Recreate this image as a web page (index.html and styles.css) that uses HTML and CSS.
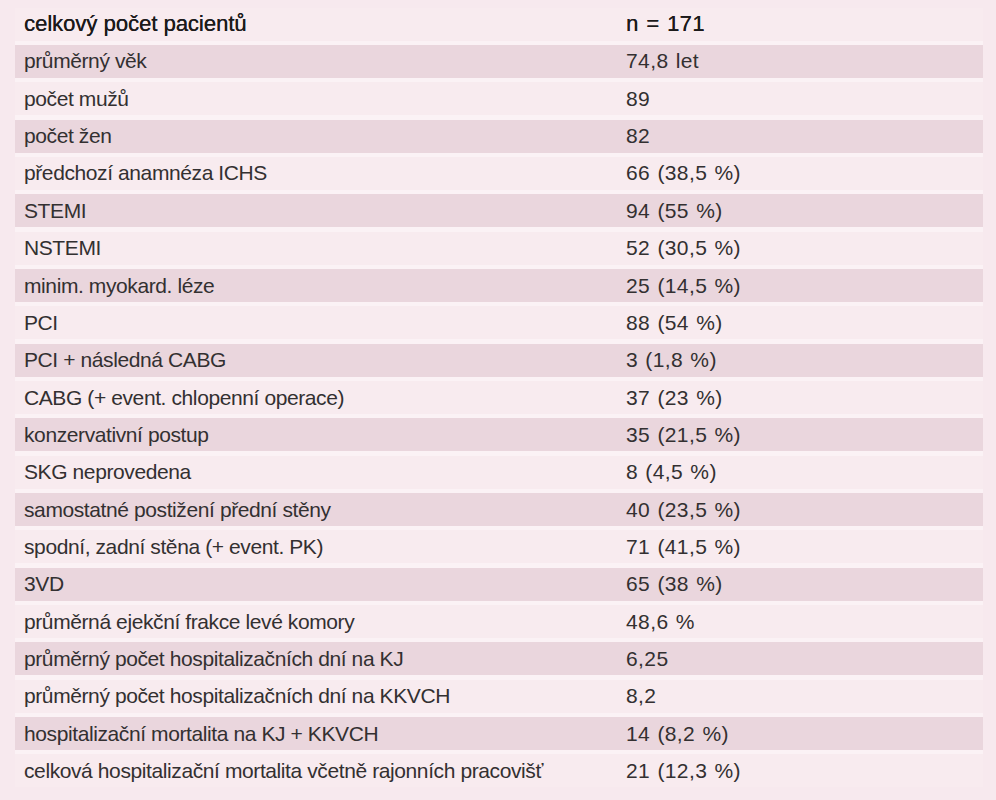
FILE: index.html
```html
<!DOCTYPE html>
<html lang="cs">
<head>
<meta charset="utf-8">
<title>Tabulka</title>
<link rel="stylesheet" href="styles.css">
</head>
<body>
<div class="table">
  <div class="row head"><span class="c1">celkový počet pacientů</span><span class="c2">n = 171</span></div>
  <div class="row dark"><span class="c1">průměrný věk</span><span class="c2">74,8 let</span></div>
  <div class="row"><span class="c1">počet mužů</span><span class="c2">89</span></div>
  <div class="row dark"><span class="c1">počet žen</span><span class="c2">82</span></div>
  <div class="row"><span class="c1">předchozí anamnéza ICHS</span><span class="c2">66 (38,5 %)</span></div>
  <div class="row dark"><span class="c1">STEMI</span><span class="c2">94 (55 %)</span></div>
  <div class="row"><span class="c1">NSTEMI</span><span class="c2">52 (30,5 %)</span></div>
  <div class="row dark"><span class="c1">minim. myokard. léze</span><span class="c2">25 (14,5 %)</span></div>
  <div class="row"><span class="c1">PCI</span><span class="c2">88 (54 %)</span></div>
  <div class="row dark"><span class="c1">PCI + následná CABG</span><span class="c2">3 (1,8 %)</span></div>
  <div class="row"><span class="c1">CABG (+ event. chlopenní operace)</span><span class="c2">37 (23 %)</span></div>
  <div class="row dark"><span class="c1">konzervativní postup</span><span class="c2">35 (21,5 %)</span></div>
  <div class="row"><span class="c1">SKG neprovedena</span><span class="c2">8 (4,5 %)</span></div>
  <div class="row dark"><span class="c1">samostatné postižení přední stěny</span><span class="c2">40 (23,5 %)</span></div>
  <div class="row"><span class="c1">spodní, zadní stěna (+ event. PK)</span><span class="c2">71 (41,5 %)</span></div>
  <div class="row dark"><span class="c1">3VD</span><span class="c2">65 (38 %)</span></div>
  <div class="row"><span class="c1">průměrná ejekční frakce levé komory</span><span class="c2">48,6 %</span></div>
  <div class="row dark"><span class="c1">průměrný počet hospitalizačních dní na KJ</span><span class="c2">6,25</span></div>
  <div class="row"><span class="c1">průměrný počet hospitalizačních dní na KKVCH</span><span class="c2">8,2</span></div>
  <div class="row dark"><span class="c1">hospitalizační mortalita na KJ + KKVCH</span><span class="c2">14 (8,2 %)</span></div>
  <div class="row"><span class="c1">celková hospitalizační mortalita včetně rajonních pracovišť</span><span class="c2">21 (12,3 %)</span></div>
</div>
</body>
</html>
```
FILE: styles.css
```css
html, body {
  margin: 0;
  padding: 0;
  background: #f7e9ee;
}
body {
  padding: 7.6px 13px 0 15px;
  font-family: "Liberation Sans", Arial, sans-serif;
  font-size: 21px;
  letter-spacing: -0.4px;
  color: #333031;
}
.table {
  display: flex;
  flex-direction: column;
  gap: 4.35px;
  background: #fbf2f5;
}
.row {
  display: grid;
  grid-template-columns: 602px 1fr;
  align-items: center;
  height: 33px;
  padding-left: 9px;
  background: #f8ebef;
}
.row.dark {
  background: #ead6dd;
}
.row.head {
  font-size: 22px;
  letter-spacing: 0;
  color: #1c1a1b;
  text-shadow: 0.25px 0 0 #1c1a1b;
}
.c1, .c2 {
  white-space: nowrap;
}
.c2 {
  letter-spacing: 0.4px;
  word-spacing: 1px;
}
```
